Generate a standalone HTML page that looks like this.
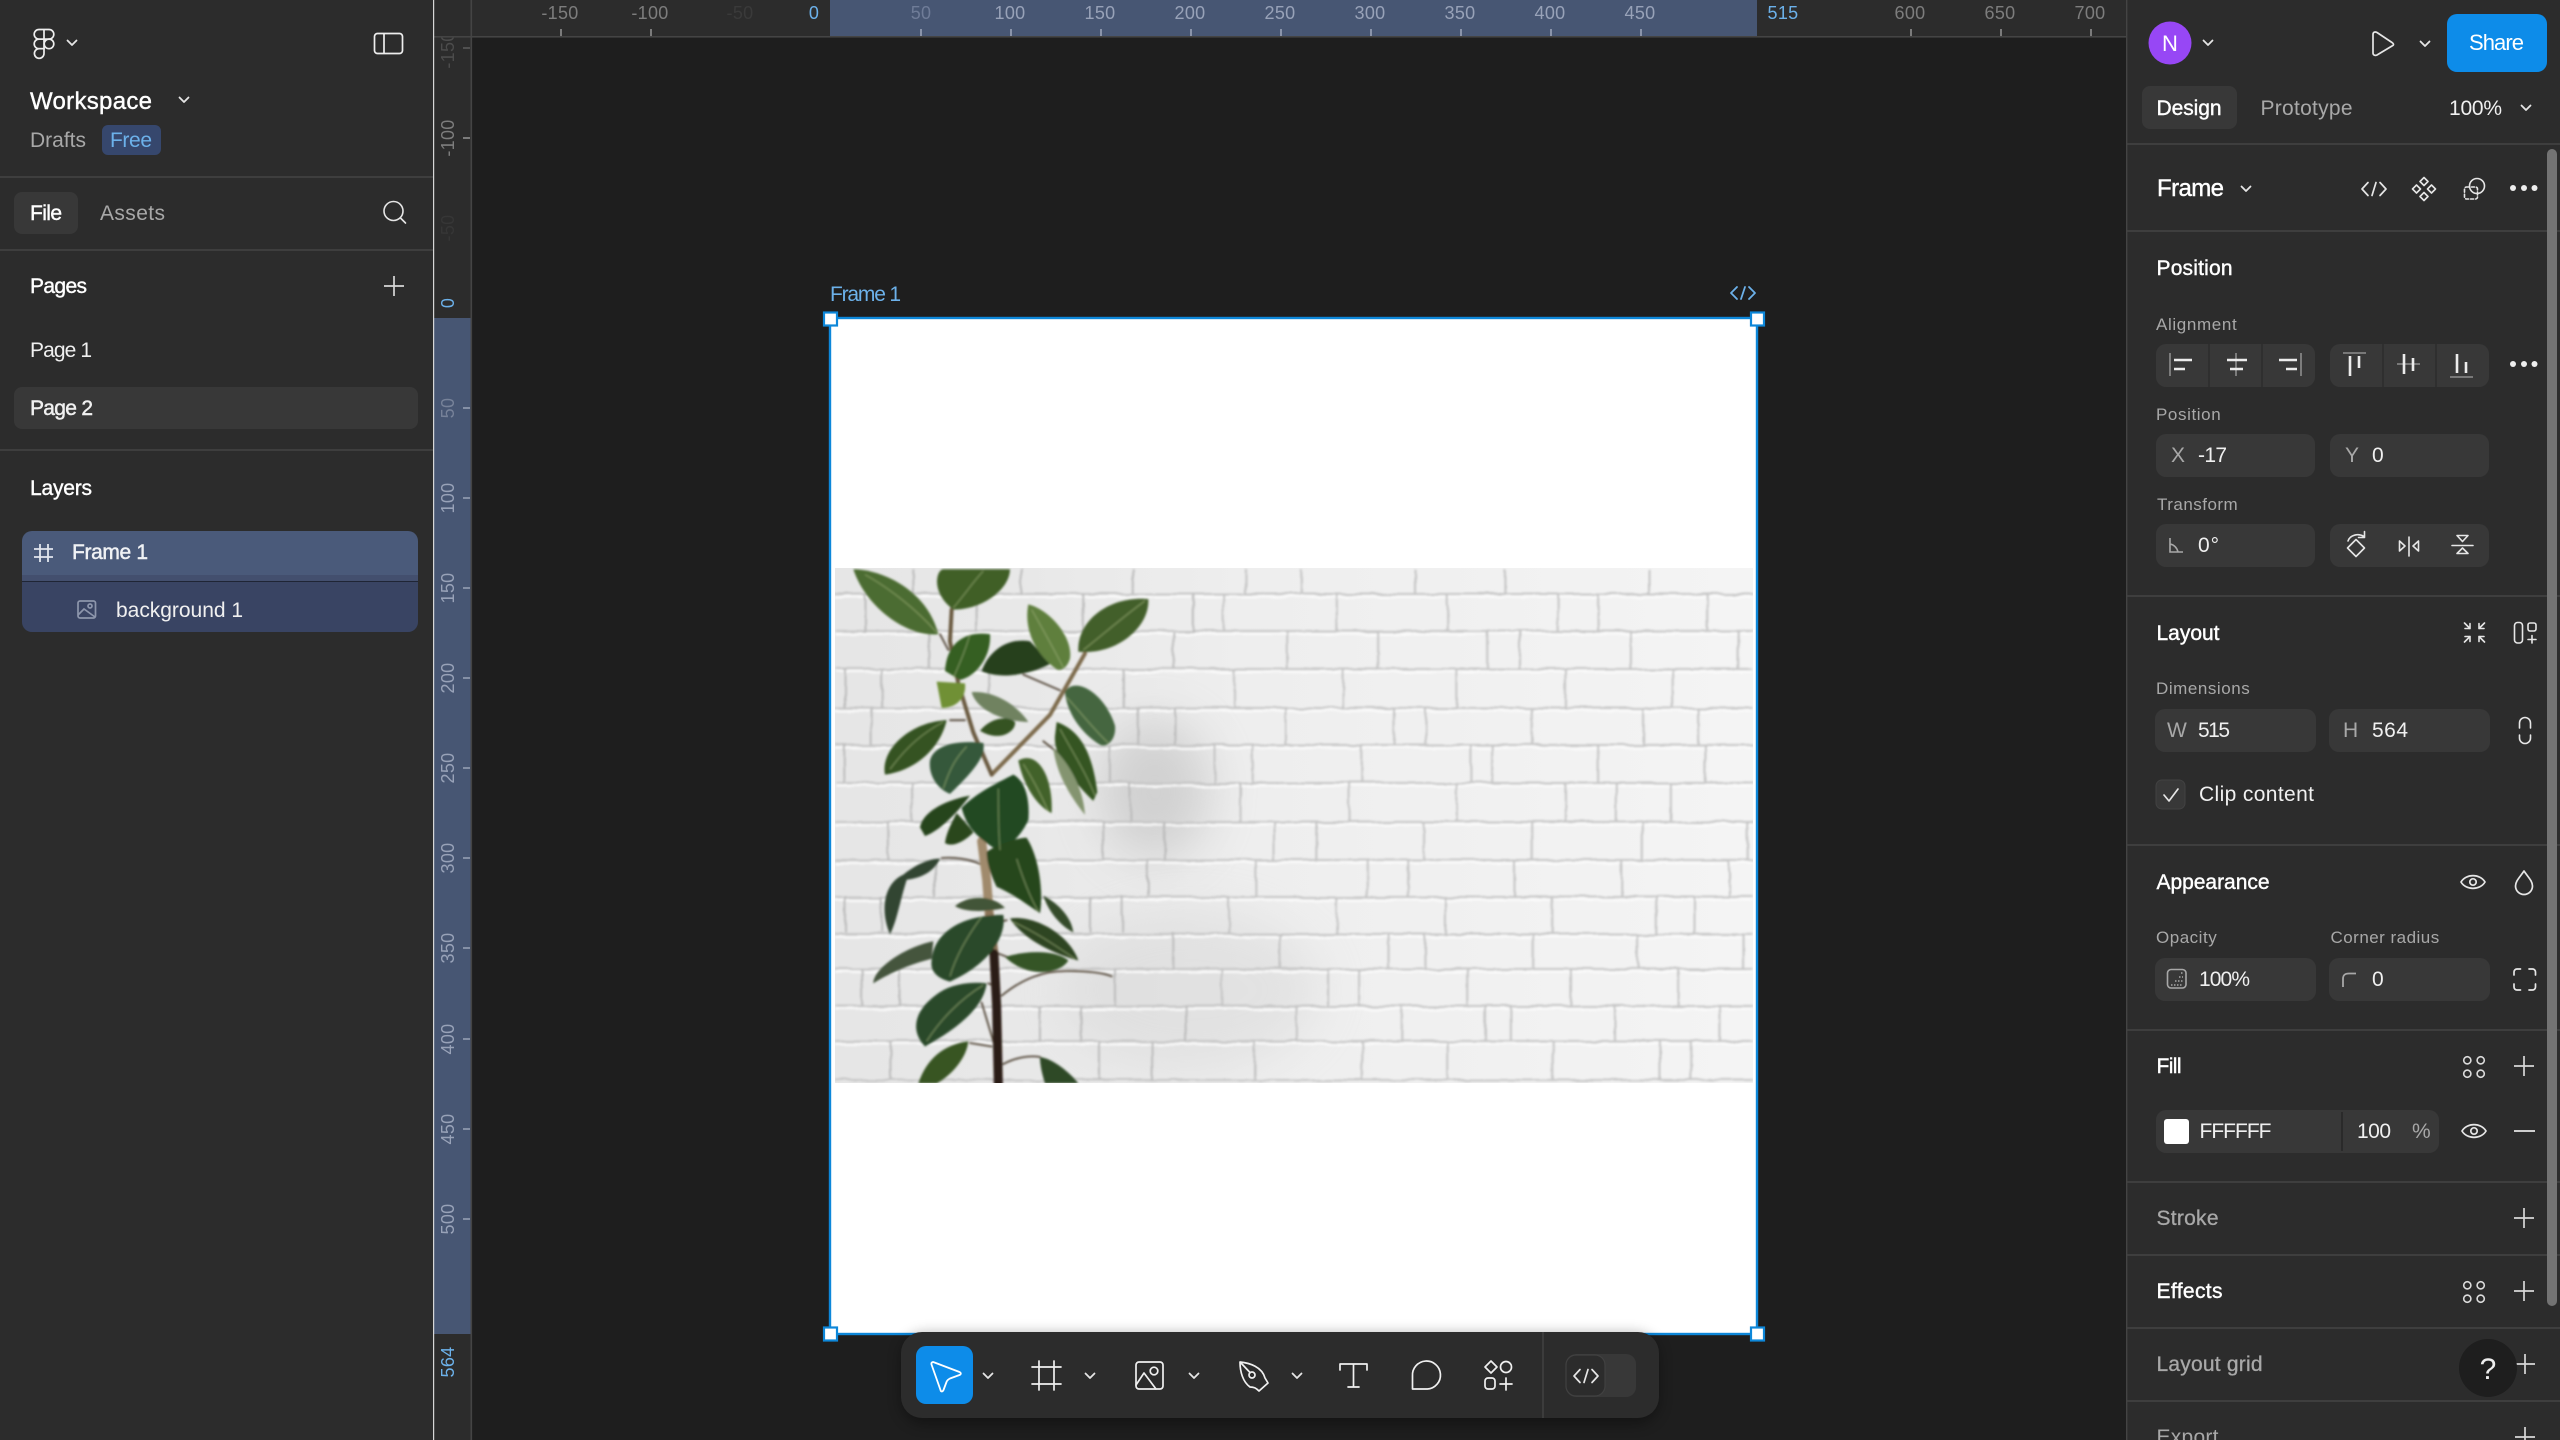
<!DOCTYPE html>
<html lang="en">
<head>
<meta charset="utf-8">
<title>Workspace</title>
<style>
html,body{margin:0;padding:0;width:2560px;height:1440px;overflow:hidden;background:#1e1e1e}
svg{display:block;position:absolute;left:0;top:0}
text{font-family:"Liberation Sans",sans-serif;font-size:21px;fill:#f0f0f0}
.m{stroke:#f4f4f4;stroke-width:.45px}
.h{font-size:22px;fill:#fff;stroke:#fff;stroke-width:.4px}
.d{fill:#a8a8a8}
.l{font-size:17px;fill:#a8a8a8;letter-spacing:.3px}
.r{font-size:18px;fill:#7d7d7d;text-anchor:middle;letter-spacing:.3px}
.rs{fill:#98a2b8}
.b{fill:#6cb1ea}
.i{fill:none;stroke:#e6e6e6;stroke-width:1.7;stroke-linecap:round;stroke-linejoin:round}
.f{fill:#383838}
.div{stroke:#444;stroke-width:1.4}
.lf path{stroke:none}
.nss{vector-effect:non-scaling-stroke}
</style>
</head>
<body>
<svg xmlns="http://www.w3.org/2000/svg" width="2560" height="1440" viewBox="0 0 2560 1440">
<defs>
<path id="chev" d="M-4.5 -2.5L0 2L4.5 -2.5" fill="none" stroke="#e6e6e6" stroke-width="1.8" stroke-linecap="round" stroke-linejoin="round"/>
<path id="plus" d="M-10 0H10M0 -10V10" fill="none" stroke="#d8d8d8" stroke-width="1.7"/>
<g id="grid4" fill="none" stroke="#dcdcdc" stroke-width="1.6"><circle cx="-6.7" cy="-6.7" r="3.6"/><circle cx="6.7" cy="-6.7" r="3.6"/><circle cx="-6.7" cy="6.7" r="3.6"/><circle cx="6.7" cy="6.7" r="3.6"/></g>
<g id="eye" fill="none" stroke="#e6e6e6" stroke-width="1.7"><path d="M-12 0C-7 -8.5 7 -8.5 12 0C7 8.5 -7 8.5 -12 0Z"/><circle r="3.2"/></g>
<path id="code" d="M-6 -6.5L-12 0L-6 6.5M6 -6.5L12 0L6 6.5M2 -6.5L-2 6.5" fill="none" stroke="#e6e6e6" stroke-width="1.7" stroke-linecap="round" stroke-linejoin="round"/>
<clipPath id="imgclip"><rect x="835" y="568" width="918" height="515"/></clipPath>
<linearGradient id="wall" x1="0" x2="1" y1="0" y2="0"><stop offset="0" stop-color="#e6e6e6"/><stop offset=".2" stop-color="#e8e8e8"/><stop offset=".45" stop-color="#eeeeee"/><stop offset="1" stop-color="#f4f4f4"/></linearGradient>
<filter id="b1" x="-5%" y="-5%" width="110%" height="110%"><feGaussianBlur stdDeviation="1"/></filter>
<filter id="brick" x="-2%" y="-2%" width="104%" height="104%"><feTurbulence type="fractalNoise" baseFrequency=".035" numOctaves="3" seed="4" result="n"/><feDisplacementMap in="SourceGraphic" in2="n" scale="5" xChannelSelector="R" yChannelSelector="G"/><feGaussianBlur stdDeviation="1"/></filter>
<filter id="b2" x="-60%" y="-60%" width="220%" height="220%"><feGaussianBlur stdDeviation="24"/></filter>
<filter id="b3" x="-10%" y="-30%" width="120%" height="160%"><feGaussianBlur stdDeviation="7"/></filter>
</defs>

<!-- canvas -->
<rect width="2560" height="1440" fill="#1e1e1e"/>

<!-- frame -->
<rect x="830" y="318" width="927" height="1016" fill="#fff"/>

<!-- image -->
<g clip-path="url(#imgclip)">
<rect x="835" y="568" width="918" height="515" fill="url(#wall)"/>
<ellipse cx="1155" cy="790" rx="55" ry="70" fill="#b0b0b0" opacity=".45" filter="url(#b2)"/>
<ellipse cx="1190" cy="990" rx="130" ry="80" fill="#c8c8c8" opacity=".3" filter="url(#b2)"/>
<g filter="url(#brick)">
<path fill="none" stroke="#fbfbfb" stroke-width="2" d="M835 597H1753M835 634H1753M835 672H1753M835 711H1753M835 748H1753M835 786H1753M835 825H1753M835 863H1753M835 900H1753M835 937H1753M835 972H1753M835 1009H1753M835 1044H1753"/>
<path fill="none" stroke="#c6c6c6" stroke-width="2" d="M835 594H1753M835 631H1753M835 669H1753M835 708H1753M835 745H1753M835 783H1753M835 822H1753M835 860H1753M835 897H1753M835 934H1753M835 969H1753M835 1006H1753M835 1041H1753M835 1080H1753"/>
<g transform="translate(810 550) scale(.3333 .3509)">
<path class="nss" fill="none" stroke="#bcbcbc" stroke-width="2" d="M310 55V125M635 55V125M970 55V125M165 125V235M500 125V235M820 125V235M1150 125V235M355 235V340M1090 235V340M105 340V450M215 340V450M535 340V450M940 340V450M185 450V555M985 450V555M1095 450V555M100 555V665M900 555V665M305 665V775M960 665V775M235 775V885M880 775V885M1065 775V885M375 885V985M1015 885V985M105 985V1090M215 985V1090M840 985V1090M935 985V1090M1090 1090V1195M155 1195V1300M270 1195V1300M915 1195V1300M690 1300V1400M815 1300V1400M1130 1300V1400M240 1400V1510M870 1400V1510M1025 1400V1510"/>
</g>
<g transform="translate(1200 550) scale(.3636 .3509)">
<path class="nss" fill="none" stroke="#c4c4c4" stroke-width="2" d="M125 55V125M280 55V125M590 55V125M840 55V125M1235 55V125M65 125V230M375 125V230M680 125V230M985 125V230M1095 125V230M1395 125V230M240 230V340M490 230V340M790 230V340M880 230V340M1185 230V340M1480 230V340M95 340V450M395 340V450M705 340V450M1005 340V450M1300 340V450M235 450V555M535 450V555M620 450V555M915 450V555M1220 450V555M1370 450V555M40 555V665M145 555V665M445 555V665M745 555V665M805 555V665M1095 555V665M1390 555V665M110 665V775M410 665V775M705 665V775M1005 665V775M1145 665V775M1295 665V775M205 775V885M320 775V885M615 775V885M915 775V885M1215 775V885M1505 775V885M155 885V990M460 885V990M570 885V990M865 885V990M1160 885V990M1455 885V990M80 990V1095M375 990V1095M675 990V1095M970 990V1095M1255 990V1095M1360 990V1095M220 1095V1195M520 1095V1195M620 1095V1195M915 1095V1195M1205 1095V1195M1495 1095V1195M60 1195V1300M355 1195V1300M435 1195V1300M735 1195V1300M1020 1195V1300M1315 1195V1300M265 1300V1400M555 1300V1400M785 1300V1400M855 1300V1400M1140 1300V1400M1430 1300V1400M150 1400V1510M445 1400V1510M680 1400V1510M970 1400V1510M1265 1400V1510M1350 1400V1510"/>
</g>
</g>
<!-- plant -->
<g filter="url(#b1)">
<g transform="translate(810 550) scale(.3333 .3509)">
<g fill="none" stroke-linecap="round">
<path class="nss" stroke="#7d6a4c" stroke-width="4" d="M545 640L720 470L825 295"/>
<path class="nss" stroke="#6a5a40" stroke-width="4" d="M545 640L490 520L445 380L420 260L425 170"/>
<path class="nss" stroke="#55483a" stroke-width="1.8" d="M390 240L415 285M420 485H465M700 545L760 590M395 878C430 875 480 880 510 895M590 1055L545 1065M565 1150L620 1170M575 1270C640 1220 700 1200 770 1200C830 1200 880 1205 905 1215M515 1290L550 1400M480 1405L545 1415M580 1465C620 1445 660 1440 690 1445M535 1235L560 1245M750 400L640 355"/>
<path class="nss" stroke="#a08a6c" stroke-width="9" d="M515 830L530 940L538 1040"/>
<path class="nss" stroke="#8b7358" stroke-width="9" d="M538 1040L552 1150"/>
<path class="nss" stroke="#2a1a14" stroke-width="9" d="M552 1150L560 1300L565 1520"/>
</g>
<g class="lf">
<path fill="#4c6c30" d="M130 55C210 55 350 110 385 240C300 250 170 170 130 55Z"/>
<path fill="#3f5f26" d="M430 170C360 120 380 55 400 55L600 55C600 110 520 170 430 170Z"/>
<path fill="#425f29" d="M805 290C800 200 900 130 1015 140C1020 220 920 300 805 290Z"/>
<path fill="#26401f" d="M515 345C540 280 600 250 660 260C690 290 710 310 720 325C660 355 570 370 515 345Z"/>
<path fill="#5f7f3e" d="M655 155C720 170 790 250 780 310C770 340 750 345 740 340C680 300 640 230 655 155Z"/>
<path fill="#365e24" d="M405 345C410 260 470 230 540 240C545 300 500 360 450 370Z"/>
<path fill="#6f9036" d="M380 375L465 380C470 420 440 450 395 450Z"/>
<path fill="#6f8260" d="M485 405C550 400 620 440 655 490C590 490 500 460 485 405Z"/>
<path fill="#365324" d="M510 515C540 480 590 470 615 490C620 515 570 550 510 515Z"/>
<path fill="#345220" d="M225 640C210 570 300 490 410 485C390 570 310 630 225 640Z"/>
<path fill="#34593a" d="M360 600C370 560 430 540 520 550C530 590 480 640 420 695C380 680 355 640 360 600Z"/>
<path fill="#456640" d="M765 405C790 360 880 400 915 500C920 540 890 565 870 555C810 520 770 460 765 405Z"/>
<path fill="#345522" d="M740 490C800 510 845 560 862 690L850 715C790 660 730 590 735 530Z"/>
<path fill="#84946f" d="M730 565C780 610 820 680 825 755C780 700 740 640 730 565Z"/>
<path fill="#42622a" d="M625 600C680 570 730 640 725 750C680 730 640 670 625 600Z"/>
<path fill="#2a471d" d="M405 835C410 800 430 770 440 750C460 770 480 790 490 805C470 825 430 850 405 835Z"/>
<path fill="#28441b" d="M330 790C340 740 420 710 480 700C440 750 390 800 345 815Z"/>
<path fill="#204a22" d="M455 735C500 690 570 660 610 640C650 660 660 720 655 770C630 820 590 850 570 860C500 820 470 790 455 735Z"/>
<path fill="#27471f" d="M530 860C560 840 620 820 650 820C690 880 700 980 690 1035C650 1010 610 980 560 960C540 920 530 890 530 860Z"/>
<path fill="#364c2c" d="M700 985C750 1010 785 1050 790 1090C750 1070 715 1030 700 985Z"/>
<path fill="#324532" d="M240 1095C210 1030 220 950 280 925C340 880 380 880 390 880C370 920 330 935 290 940C270 1000 260 1060 240 1095Z"/>
<path fill="#425438" d="M435 1015C480 980 550 985 585 1020C540 1030 470 1035 435 1015Z"/>
<path fill="#2a4a2a" d="M365 1170C370 1100 440 1040 580 1040C590 1100 540 1180 420 1230C380 1220 360 1200 365 1170Z"/>
<path fill="#2e4523" d="M600 1050C680 1040 780 1100 805 1170C730 1150 640 1110 600 1050Z"/>
<path fill="#365528" d="M585 1160C650 1140 740 1140 775 1170C750 1210 650 1220 585 1160Z"/>
<path fill="#44553c" d="M190 1235C190 1190 290 1130 370 1115L365 1165C300 1180 230 1210 190 1235Z"/>
<path fill="#2a4a2a" d="M345 1415C300 1370 310 1310 390 1260C430 1235 490 1230 530 1235C520 1310 430 1370 345 1415Z"/>
<path fill="#375524" d="M325 1520C350 1450 400 1410 475 1400C470 1450 420 1500 380 1520Z"/>
<path fill="#2d4925" d="M690 1445C730 1450 780 1490 805 1520L705 1520C695 1490 690 1465 690 1445Z"/>
</g>
<path class="nss" fill="none" stroke="#a2b67c" stroke-width="1.1" opacity=".6" d="M165 70C240 110 320 170 380 235M430 165C470 120 490 90 520 60M820 285C880 240 940 190 1005 145M665 170C695 220 725 270 760 335M430 365C450 320 465 290 480 240M240 625C290 560 340 520 400 490M400 680C420 620 440 590 470 560M770 420C810 460 850 510 895 550M750 510C790 580 825 630 855 700M640 610C660 640 690 690 715 745M565 680C565 740 565 800 570 855M620 880C640 940 660 990 685 1030M420 1215C440 1150 480 1090 515 1045M350 1400C390 1340 450 1280 520 1240M610 1060C680 1090 740 1130 795 1165"/>
</g>
</g>
</g>

<!-- selection -->
<rect x="830" y="318" width="927" height="1016" fill="none" stroke="#0d87d9" stroke-width="2.4"/>
<g fill="#fff" stroke="#0d87d9" stroke-width="2.2">
<rect x="824" y="312.500" width="13" height="13"/><rect x="1751" y="312.500" width="13" height="13"/>
<rect x="824" y="1327.500" width="13" height="13"/><rect x="1751" y="1327.500" width="13" height="13"/>
</g>
<text x="830" y="301" textLength="71" class="b">Frame 1</text>
<path d="M1737 287L1731 293L1737 299M1749 287L1755 293L1749 299M1745 287L1741 299" fill="none" stroke="#6cb1ea" stroke-width="1.8" stroke-linecap="round" stroke-linejoin="round"/>

<!-- vertical ruler -->
<rect x="434" y="0" width="36.5" height="1440" fill="#2c2c2c"/>
<rect x="434" y="318" width="36.5" height="1016" fill="#475673"/>
<rect x="470.5" y="0" width="1.6" height="1440" fill="#444"/>
<path d="M463 138H470" stroke="#8f8f8f" stroke-width="1.6"/>
<path d="M463 48H470" stroke="#5a5a5a" stroke-width="1.6"/>
<path d="M463 408H470M463 498H470M463 588H470M463 678H470M463 768H470M463 858H470M463 948H470M463 1039H470M463 1129H470M463 1219H470" stroke="#9aa3b8" stroke-width="1.6"/>
<text class="r" transform="translate(454 138) rotate(-90)">-100</text>
<text class="r" style="fill:#4c4c4c" transform="translate(454 50) rotate(-90)">-150</text>
<text class="r" style="fill:#363636" transform="translate(454 228) rotate(-90)">-50</text>
<text class="r" style="fill:#6cb1ea" transform="translate(454 303) rotate(-90)">0</text>
<text class="r" style="fill:#778299" transform="translate(454 408) rotate(-90)">50</text>
<text class="r rs" transform="translate(454 498) rotate(-90)">100</text>
<text class="r rs" transform="translate(454 588) rotate(-90)">150</text>
<text class="r rs" transform="translate(454 678) rotate(-90)">200</text>
<text class="r rs" transform="translate(454 768) rotate(-90)">250</text>
<text class="r rs" transform="translate(454 858) rotate(-90)">300</text>
<text class="r rs" transform="translate(454 948) rotate(-90)">350</text>
<text class="r rs" transform="translate(454 1039) rotate(-90)">400</text>
<text class="r rs" transform="translate(454 1129) rotate(-90)">450</text>
<text class="r rs" transform="translate(454 1219) rotate(-90)">500</text>
<text class="r" style="fill:#6cb1ea" transform="translate(454 1362) rotate(-90)">564</text>

<!-- horizontal ruler -->
<rect x="434" y="0" width="1693" height="36" fill="#2c2c2c"/>
<rect x="830" y="0" width="927" height="36" fill="#475673"/>
<rect x="434" y="36" width="1693" height="1.6" fill="#444"/>
<rect x="470.500" y="0" width="1.6" height="37" fill="#444"/>
<path d="M561 29V36M651 29V36M1911 29V36M2001 29V36M2091 29V36" stroke="#8f8f8f" stroke-width="1.6"/>
<path d="M921 29V36M1011 29V36M1101 29V36M1191 29V36M1281 29V36M1371 29V36M1461 29V36M1551 29V36M1641 29V36" stroke="#9aa3b8" stroke-width="1.6"/>
<text class="r" x="560" y="19">-150</text>
<text class="r" x="650" y="19">-100</text>
<text class="r" style="fill:#3a3a3a" x="740" y="19">-50</text>
<text class="r" style="fill:#6cb1ea" x="814" y="19">0</text>
<text class="r" style="fill:#6f7c98" x="921" y="19">50</text>
<text class="r rs" x="1010" y="19">100</text>
<text class="r rs" x="1100" y="19">150</text>
<text class="r rs" x="1190" y="19">200</text>
<text class="r rs" x="1280" y="19">250</text>
<text class="r rs" x="1370" y="19">300</text>
<text class="r rs" x="1460" y="19">350</text>
<text class="r rs" x="1550" y="19">400</text>
<text class="r rs" x="1640" y="19">450</text>
<text class="r" style="fill:#6cb1ea" x="1783" y="19">515</text>
<text class="r" x="1910" y="19">600</text>
<text class="r" x="2000" y="19">650</text>
<text class="r" x="2090" y="19">700</text>

<!-- left panel -->
<rect x="0" y="0" width="433" height="1440" fill="#2c2c2c"/>
<rect x="433" y="0" width="1.2" height="1440" fill="#d6d6d6"/>
<g fill="none" stroke="#eee" stroke-width="1.7">
<path d="M44 29.5H39a4.8 4.8 0 0 0 0 9.6H44ZM44 29.5H49a4.8 4.8 0 0 1 0 9.6H44ZM44 39.1H39a4.8 4.8 0 0 0 0 9.6H44Z"/>
<circle cx="49" cy="43.9" r="4.8"/>
<path d="M39 48.7H44V53.5a4.8 4.8 0 1 1 -5 -4.8Z"/>
<rect x="374.5" y="33.5" width="28" height="20" rx="3"/><path d="M384 33.5V53.5"/>
</g>
<use href="#chev" x="72" y="43"/>
<text class="h" style="font-size:24px" x="30" y="109" textLength="122">Workspace</text>
<use href="#chev" x="184" y="100"/>
<text class="d" x="30" y="147" textLength="56">Drafts</text>
<rect x="102" y="125" width="59" height="30" rx="6" fill="#36476d"/>
<text x="110" y="147" textLength="42" style="fill:#6cb1ea">Free</text>
<path class="div" d="M0 177H433M0 250H433M0 450H433"/>
<rect x="14" y="192" width="64" height="42" rx="8" class="f"/>
<text class="h" x="30" y="220" textLength="32" style="font-size:21px">File</text>
<text class="d" x="100" y="220" textLength="65">Assets</text>
<g class="i" style="stroke-width:1.6"><circle cx="393.500" cy="211" r="9.500"/><path d="M400.500 218L405.500 223"/></g>
<text class="h" style="font-size:21px" x="30" y="293" textLength="57">Pages</text>
<use href="#plus" x="394" y="286"/>
<text x="30" y="357" textLength="62">Page 1</text>
<rect x="14" y="387" width="404" height="42" rx="8" class="f"/>
<text class="m" x="30" y="415" textLength="63">Page 2</text>
<text class="h" style="font-size:21px" x="30" y="495" textLength="62">Layers</text>
<path d="M22 541a10 10 0 0 1 10 -10H408a10 10 0 0 1 10 10V575H22Z" fill="#4a5a7a"/>
<rect x="22" y="575" width="396" height="6" fill="#434f6e"/>
<rect x="22" y="581" width="396" height="1" fill="#1f2535"/>
<path d="M22 582H418V622a10 10 0 0 1 -10 10H32a10 10 0 0 1 -10 -10Z" fill="#394463"/>
<path d="M40 544V562M48 544V562M34 549H53M34 557H53" fill="none" stroke="#e2e6ee" stroke-width="1.8"/>
<text class="m" style="fill:#eef1f6" x="72" y="559" textLength="76">Frame 1</text>
<g fill="none" stroke="#8d96ac" stroke-width="1.7"><rect x="78" y="601" width="17.5" height="17" rx="2"/><path d="M78 615L84 609L95 617"/><circle cx="90" cy="606" r="2"/></g>
<text x="116" y="617" textLength="127">background 1</text>

<!-- right panel -->
<rect x="2127" y="0" width="433" height="1440" fill="#2c2c2c"/>
<rect x="2126" y="0" width="1.4" height="1440" fill="#444"/>
<circle cx="2170" cy="43" r="21.5" fill="#9747f5"/>
<text x="2170" y="51" text-anchor="middle" style="fill:#fff;font-size:22px">N</text>
<use href="#chev" x="2208" y="43"/>
<path class="i" d="M2373 34.5C2373 32 2375 31.5 2377 32.5L2392 42.5C2394 44 2394 45 2392 46L2377 55C2375 56 2373 55 2373 53Z"/>
<use href="#chev" x="2425" y="44"/>
<rect x="2447" y="14" width="100" height="58" rx="10" fill="#0d8ce9"/>
<text x="2469" y="50" textLength="55" style="fill:#fff;font-size:22px">Share</text>

<rect x="2142" y="86" width="95" height="43" rx="8" class="f"/>
<text class="h" style="font-size:21px" x="2156.500" y="115" textLength="65">Design</text>
<text class="d" x="2260.500" y="115" textLength="92">Prototype</text>
<text x="2449" y="115" textLength="53">100%</text>
<use href="#chev" x="2526" y="108"/>
<path class="div" d="M2127 144H2560M2127 231H2560M2127 596H2560M2127 845H2560M2127 1030H2560M2127 1182H2560M2127 1255H2560M2127 1328H2560M2127 1401H2560"/>
<rect x="2547" y="149" width="10" height="1157" rx="5" fill="#737373"/>

<text class="h" style="font-size:24px" x="2157" y="196" textLength="67">Frame</text>
<use href="#chev" x="2246" y="189"/>
<use href="#code" x="2374" y="189"/>
<g class="i" style="stroke-width:1.6">
<path d="M2424 177.500l4 4l-4 4l-4 -4ZM2424 192.500l4 4l-4 4l-4 -4ZM2416.500 185l4 4l-4 4l-4 -4ZM2431.500 185l4 4l-4 4l-4 -4Z"/>
<circle cx="2477" cy="186" r="7.500"/>
<rect x="2464.500" y="187" width="13" height="12" rx="2" stroke-dasharray="3 2"/>
</g>
<g fill="#eee"><circle cx="2513" cy="188" r="3"/><circle cx="2524" cy="188" r="3"/><circle cx="2534.500" cy="188" r="3"/></g>

<text class="h" style="font-size:21px" x="2156.500" y="275" textLength="76">Position</text>
<text class="l" x="2156" y="330" textLength="81">Alignment</text>
<rect x="2156" y="344" width="159" height="43" rx="10" class="f"/>
<rect x="2330" y="344" width="159" height="43" rx="10" class="f"/>
<path d="M2209 344V387M2262 344V387M2383 344V387M2436 344V387M2383 524V567M2436 524V567" stroke="#2c2c2c" stroke-width="1.4"/>
<path d="M2170 353V376M2236 353V376M2301 353V376M2343 353H2366M2397 364H2420M2450 377H2473" stroke="#8d8d8d" stroke-width="1.6" fill="none"/>
<path d="M2174 360H2192M2174 369H2185M2227 360H2247M2230 369H2243M2279 360H2297M2286 369H2297M2350 356V376M2359 356V368M2404 354V374M2413 358V371M2457 354V373M2466 362V373" stroke="#ececec" stroke-width="2.6" fill="none"/>
<g fill="#eee"><circle cx="2513" cy="364" r="3"/><circle cx="2524" cy="364" r="3"/><circle cx="2534.500" cy="364" r="3"/></g>

<text class="l" x="2156" y="420" textLength="65">Position</text>
<rect x="2156" y="434" width="159" height="43" rx="10" class="f"/>
<rect x="2330" y="434" width="159" height="43" rx="10" class="f"/>
<text class="d" x="2171" y="462" textLength="12">X</text>
<text x="2198" y="462" textLength="29">-17</text>
<text class="d" x="2345" y="462" textLength="12">Y</text>
<text x="2372" y="462">0</text>

<text class="l" x="2157" y="510" textLength="81">Transform</text>
<rect x="2156" y="524" width="159" height="43" rx="10" class="f"/>
<rect x="2330" y="524" width="159" height="43" rx="10" class="f"/>
<path d="M2170 538V552H2183M2170 544C2175 545 2177 548 2178 552" fill="none" stroke="#a8a8a8" stroke-width="1.6"/>
<text x="2198" y="552" textLength="21">0°</text>
<g class="i" style="stroke-width:1.6">
<path d="M2356 539.500l8.500 8.500l-8.500 8.500l-8.500 -8.500Z"/>
<path d="M2348 541C2350 535 2358 533 2364 536.500M2364.500 531.500V537.500H2358.500"/>
<path d="M2409 537V556M2399.500 541V551L2405 546ZM2418.500 541V551L2413 546Z"/>
<path d="M2452 545.500H2473M2457 535.500H2468L2462.500 541.500ZM2457 553.500H2468L2462.500 548Z"/>
<path d="M2464.500 623L2470 628.500M2470 623.500V628.500H2465M2484.500 623L2479 628.500M2479 623.500V628.500H2484M2464.500 642L2470 636.500M2470 641.500V636.500H2465M2484.500 642L2479 636.500M2479 641.500V636.500H2484" />
<rect x="2514.500" y="622.500" width="8" height="20.500" rx="3"/>
<rect x="2528" y="623" width="8" height="8" rx="2"/>
<path d="M2532 635.500V643M2528 639.500H2536"/>
<path d="M2519.500 728V723a5.500 5.500 0 0 1 11 0V728M2519.500 735V738a5.500 5.500 0 0 0 11 0V735"/>
</g>
<text class="h" style="font-size:21px" x="2156.500" y="640" textLength="63">Layout</text>
<text class="l" x="2156" y="694" textLength="94">Dimensions</text>
<rect x="2155" y="709" width="161" height="43" rx="10" class="f"/>
<rect x="2329" y="709" width="161" height="43" rx="10" class="f"/>
<text class="d" x="2167" y="737" textLength="19">W</text>
<text x="2198" y="737" textLength="32">515</text>
<text class="d" x="2343" y="737" textLength="13">H</text>
<text x="2372" y="737" textLength="36">564</text>
<rect x="2156" y="780" width="29" height="29" rx="6" fill="#383838" stroke="#424242" stroke-width="1"/>
<path d="M2164 795L2169 801L2178 789" class="i"/>
<text x="2199" y="801" textLength="115">Clip content</text>

<text class="h" style="font-size:21px" x="2156.500" y="889" textLength="113">Appearance</text>
<use href="#eye" x="2473" y="882"/>
<path class="i" d="M2524 871C2520 877 2515.500 881 2515.500 886a8.500 8.500 0 0 0 17 0C2532.500 881 2528 877 2524 871Z"/>
<text class="l" x="2156" y="943" textLength="61">Opacity</text>
<text class="l" x="2330.500" y="943" textLength="109">Corner radius</text>
<rect x="2155" y="958" width="161" height="43" rx="10" class="f"/>
<rect x="2329" y="958" width="161" height="43" rx="10" class="f"/>
<rect x="2167.500" y="969.500" width="18.500" height="18.500" rx="3.500" fill="none" stroke="#a8a8a8" stroke-width="1.6"/>
<path d="M2171 985H2183M2175 981H2183M2179 977H2183M2181 973H2183" stroke="#a8a8a8" stroke-width="1.4" stroke-dasharray="1.500 1.500"/>
<text x="2199" y="986" textLength="51">100%</text>
<path d="M2343 987V979C2343 975 2345 973.500 2349 973.500H2356" fill="none" stroke="#a8a8a8" stroke-width="1.8"/>
<text x="2372" y="986">0</text>
<path class="i" d="M2514 975V972a3 3 0 0 1 3 -3H2520.500M2529 969H2532.500a3 3 0 0 1 3 3V975M2535.500 984V987a3 3 0 0 1 -3 3H2529M2520.500 990H2517a3 3 0 0 1 -3 -3V984"/>

<text class="h" style="font-size:21px" x="2156.500" y="1073" textLength="25">Fill</text>
<use href="#grid4" x="2474" y="1067"/>
<use href="#plus" x="2524" y="1066"/>
<rect x="2156" y="1110" width="283" height="43" rx="10" class="f"/>
<rect x="2164" y="1119" width="25" height="25" rx="3" fill="#fff"/>
<text x="2199.500" y="1138" textLength="72">FFFFFF</text>
<rect x="2341" y="1112" width="2" height="39" fill="#2a2a2a"/>
<text x="2357" y="1138" textLength="34">100</text>
<text class="d" x="2412" y="1138" textLength="14">%</text>
<use href="#eye" x="2474" y="1131"/>
<path d="M2514 1131H2535" stroke="#e6e6e6" stroke-width="1.8"/>

<text class="d m" style="stroke:#a8a8a8;stroke-width:.3px" x="2156.500" y="1225" textLength="62">Stroke</text>
<use href="#plus" x="2524" y="1218"/>
<text class="h" style="font-size:21px" x="2156.500" y="1298" textLength="66">Effects</text>
<use href="#grid4" x="2474" y="1292"/>
<use href="#plus" x="2524" y="1291"/>
<text class="d m" style="stroke:#a8a8a8;stroke-width:.3px" x="2156.500" y="1371" textLength="106">Layout grid</text>
<use href="#plus" x="2525" y="1364"/>
<circle cx="2488" cy="1368" r="29" fill="#1e1e1e"/>
<text x="2488" y="1379" text-anchor="middle" style="font-size:30px;fill:#eee">?</text>
<text class="d" x="2156.500" y="1444" textLength="62">Export</text>
<use href="#plus" x="2525" y="1437"/>

<!-- toolbar -->
<rect x="901" y="1334" width="758" height="90" rx="24" fill="#000" opacity=".35" filter="url(#b3)"/>
<rect x="901" y="1332" width="758" height="86" rx="21" fill="#2c2c2c"/>
<path d="M1543 1332V1418" stroke="#444" stroke-width="1.4"/>
<rect x="916" y="1346" width="57" height="58" rx="10" fill="#0d8ce9"/>
<path d="M931.500 1364.500C931 1362.500 932.500 1361.500 934.500 1362.500L959.500 1372C961.500 1373 961 1374.500 959.500 1375L950 1378.500C948 1379.500 947 1380.500 946.500 1382L943.500 1390C942.500 1392 941 1392 940.500 1390Z" fill="none" stroke="#fff" stroke-width="1.8" stroke-linejoin="round"/>
<use href="#chev" x="988" y="1376"/>
<use href="#chev" x="1090" y="1376"/>
<use href="#chev" x="1194" y="1376"/>
<use href="#chev" x="1297" y="1376"/>
<g class="i" style="stroke:#f0f0f0">
<path d="M1039 1361V1390M1054 1361V1390M1032 1367H1061M1032 1384H1061"/>
<rect x="1136" y="1362" width="27" height="27" rx="3"/><circle cx="1154" cy="1371" r="3.800"/><path d="M1136 1385L1144 1373L1156 1389"/>
<path d="M1240 1362C1250 1363 1262 1367 1265 1378L1268 1383L1259 1391C1256 1388 1254 1387 1250 1387C1243 1382 1240 1372 1240 1362Z"/><circle cx="1252" cy="1375" r="3"/><path d="M1240.500 1362.500L1250 1372.500"/>
<path d="M1340 1370V1364H1367V1370M1353.500 1364V1387M1348 1387H1359"/>
<path d="M1412.500 1389V1376a14 14 0 1 1 15 13Z"/>
<path d="M1491 1361l6 6l-6 6l-6 -6Z"/><circle cx="1506" cy="1367" r="5.500"/><rect x="1485" y="1378" width="10" height="11" rx="3"/><path d="M1506 1378V1390M1500 1384H1512"/>
</g>
<rect x="1566" y="1354" width="70" height="43" rx="10" fill="#383838"/>
<rect x="1566" y="1355" width="39" height="41" rx="10" fill="#2c2c2c" stroke="#414141" stroke-width="1.2"/>
<use href="#code" x="1586" y="1376"/>
</svg>
</body>
</html>
